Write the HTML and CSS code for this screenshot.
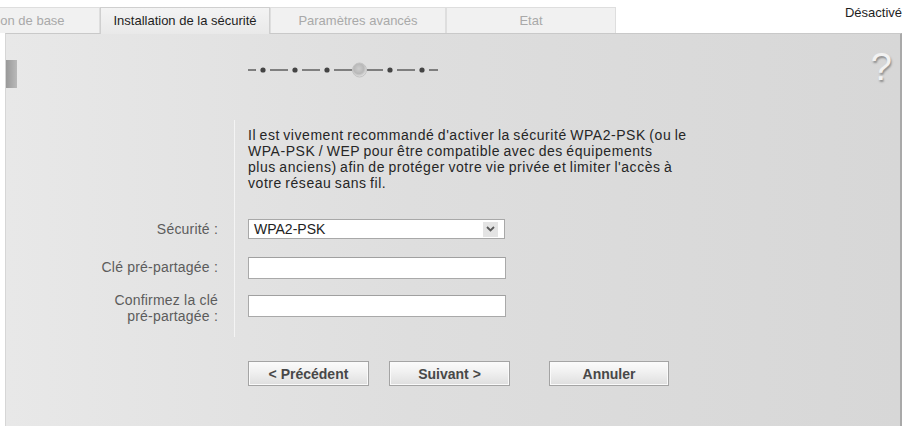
FILE: index.html
```html
<!DOCTYPE html>
<html lang="fr">
<head>
<meta charset="utf-8">
<title>Installation de la sécurité</title>
<link rel="stylesheet" href="styles.css">
</head>
<body>
<div class="topbar">
  <nav class="tabs">
    <div class="tab tab-first">Configuration de base</div>
    <div class="tab tab-active">Installation de la sécurité</div>
    <div class="tab tab-wide">Paramètres avancés</div>
    <div class="tab">Etat</div>
  </nav>
  <div class="status">Désactivé</div>
</div>
<main class="panel">
  <div class="panel-head">
    <div class="side-handle"></div>
    <svg class="steps" width="192" height="16" viewBox="0 0 192 16" aria-hidden="true">
      <defs>
        <radialGradient id="cur" cx="45%" cy="40%" r="60%">
          <stop offset="0" stop-color="#cdcdcd"/>
          <stop offset="0.6" stop-color="#b8b8b8"/>
          <stop offset="1" stop-color="#e6e6e6"/>
        </radialGradient>
      </defs>
      <g stroke="#555" stroke-width="1.4">
        <line x1="1" y1="8" x2="9" y2="8"/>
        <line x1="23" y1="8" x2="41" y2="8"/>
        <line x1="55" y1="8" x2="73" y2="8"/>
        <line x1="87" y1="8" x2="105" y2="8"/>
        <line x1="120" y1="8" x2="136" y2="8"/>
        <line x1="150" y1="8" x2="168" y2="8"/>
        <line x1="182" y1="8" x2="191" y2="8"/>
      </g>
      <g fill="#444">
        <circle cx="16" cy="8" r="2.6"/>
        <circle cx="48" cy="8" r="2.6"/>
        <circle cx="80" cy="8" r="2.6"/>
        <circle cx="143" cy="8" r="2.6"/>
        <circle cx="175" cy="8" r="2.6"/>
      </g>
      <circle cx="112.5" cy="8" r="7" fill="url(#cur)" stroke="#c2c2c2" stroke-width="1"/>
    </svg>
    <div class="help">?</div>
  </div>

  <div class="form">
    <div class="label"></div>
    <div class="field field-intro">
      <p class="intro">Il est vivement recommandé d'activer la sécurité WPA2-PSK (ou le<br>WPA-PSK / WEP pour être compatible avec des équipements<br>plus anciens) afin de protéger votre vie privée et limiter l'accès à<br>votre réseau sans fil.</p>
    </div>

    <div class="label">Sécurité :</div>
    <div class="field field-select">
      <div class="select">
        <span class="select-value">WPA2-PSK</span>
        <span class="select-arrow">
          <svg width="9" height="6" viewBox="0 0 9 6" aria-hidden="true"><path d="M1 1 L4.5 4.5 L8 1" fill="none" stroke="#5a5a5a" stroke-width="1.8"/></svg>
        </span>
      </div>
    </div>

    <div class="label">Clé pré-partagée :</div>
    <div class="field field-input">
      <input class="text-input" type="text">
    </div>

    <div class="label label-top">Confirmez la clé<br>pré-partagée :</div>
    <div class="field field-input field-last">
      <input class="text-input" type="text">
    </div>

    <div class="actions">
      <button class="btn" type="button">&lt; Précédent</button>
      <button class="btn" type="button">Suivant &gt;</button>
      <button class="btn btn-cancel" type="button">Annuler</button>
    </div>
  </div>
</main>
</body>
</html>
```
FILE: styles.css
```css
html, body {
  margin: 0;
  padding: 0;
  background: #ffffff;
  overflow: hidden;
}

body {
  font-family: "Liberation Sans", Arial, sans-serif;
  color: #222;
  width: 906px;
  height: 426px;
}

.topbar {
  display: flex;
  align-items: flex-start;
  height: 33px;
}

.tabs {
  display: flex;
  align-items: flex-end;
  height: 33px;
  margin-left: -98px;
}

.tab {
  box-sizing: border-box;
  width: 170px;
  height: 26px;
  line-height: 25px;
  text-align: center;
  font-size: 13px;
  color: #a9a9a9;
  background: #f1f1f1;
  border: 1px solid #dedede;
  border-bottom: none;
  white-space: nowrap;
  overflow: hidden;
}

.tab-first {
  width: 198px;
}

.tab-wide {
  width: 176px;
}

.tab-active {
  position: relative;
  z-index: 2;
  height: 27px;
  margin-bottom: -1px;
  color: #1e1e1e;
  background: linear-gradient(#f3f3f3, #e9e9e9);
  border-color: #cfcfcf;
}

.status {
  margin-left: auto;
  padding-top: 5px;
  padding-right: 4px;
  font-size: 13px;
  color: #1e1e1e;
}

.panel {
  box-sizing: border-box;
  width: 897px;
  margin-left: 5px;
  min-height: 400px;
  border-top: 1px solid #c9c9c9;
  border-left: 1px solid #d6d6d6;
  border-right: 2px solid #a9a9a9;
  background: linear-gradient(to right, #e8e8e8 0%, #dedede 45%, #d7d7d7 100%);
}

.panel-head {
  display: flex;
  align-items: flex-start;
  height: 86px;
}

.side-handle {
  width: 11px;
  height: 28px;
  margin-top: 26px;
  background: linear-gradient(to right, #999999, #b9b9b9);
}

.steps {
  display: block;
  margin-left: 230px;
  margin-top: 28px;
}

.help {
  margin-left: auto;
  margin-right: 8px;
  margin-top: 14px;
  font-size: 38px;
  line-height: 38px;
  color: #f2f2f2;
  text-shadow: 1px 2px 2px #8e8e8e;
}

.form {
  display: grid;
  grid-template-columns: 228px 1fr;
}

.label {
  align-self: center;
  padding-right: 16px;
  text-align: right;
  font-size: 14px;
  line-height: 16px;
  letter-spacing: 0.2px;
  color: #5c5c5c;
}

.label-top {
  align-self: start;
  padding-top: 6px;
}

.field {
  border-left: 1px solid #f4f4f4;
  padding-left: 13px;
}

.field-intro {
  padding-top: 7px;
  padding-bottom: 19px;
}

.intro {
  margin: 0;
  font-size: 14px;
  line-height: 16px;
  letter-spacing: 0.55px;
  word-spacing: -1px;
  color: #262626;
}

.field-select {
  padding-top: 9px;
  padding-bottom: 9px;
}

.select {
  box-sizing: border-box;
  width: 257px;
  height: 20px;
  display: flex;
  align-items: center;
  background: #fff;
  border: 1px solid #a8a8a8;
}

.select-value {
  flex: 1;
  padding-left: 5px;
  font-size: 14px;
  color: #222;
}

.select-arrow {
  width: 15px;
  height: 15px;
  margin-right: 6px;
  display: flex;
  align-items: center;
  justify-content: center;
  background: #e4e4e4;
}

.field-input {
  padding-top: 9px;
  padding-bottom: 7px;
}

.field-last {
  padding-bottom: 20px;
}

.text-input {
  display: block;
  box-sizing: border-box;
  width: 258px;
  height: 22px;
  margin: 0;
  padding: 0 4px;
  background: #fff;
  border: 1px solid #a9a9a9;
  border-top-color: #a0a0a0;
  outline: none;
}

.actions {
  grid-column: 2;
  display: flex;
  gap: 20px;
  padding-left: 14px;
  padding-top: 24px;
}

.btn {
  box-sizing: border-box;
  width: 121px;
  height: 25px;
  margin: 0;
  padding: 0;
  font-family: "Liberation Sans", Arial, sans-serif;
  font-size: 14px;
  font-weight: bold;
  color: #484848;
  background: linear-gradient(#fbfbfb, #f0f0f0 45%, #dedede);
  border: 1px solid #a4a4a4;
  box-shadow: inset 0 0 0 1px #fafafa;
}

.btn-cancel {
  margin-left: 19px;
  width: 120px;
}
```
